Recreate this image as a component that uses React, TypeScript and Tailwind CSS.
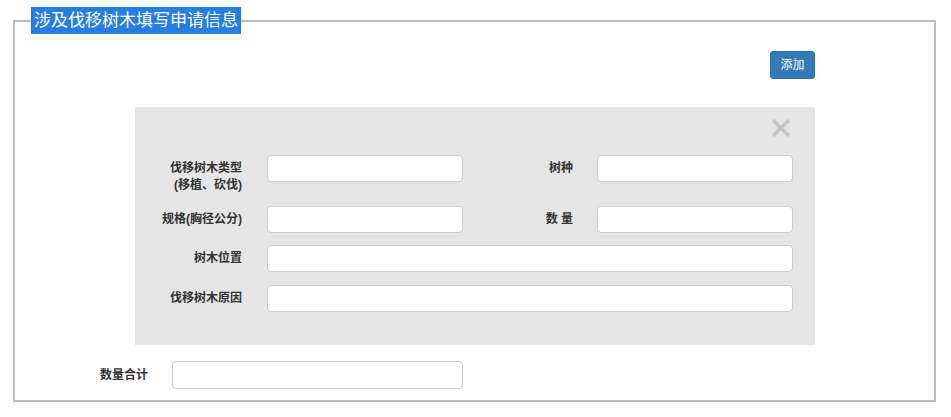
import { useState } from "react";

const font = { fontFamily: '"Liberation Sans", "Noto Sans CJK SC", sans-serif' };

function Field({ w }: { w: string }) {
  return (
    <input
      className={`${w} h-[27px] rounded-[4px] border border-[#cccccc] bg-white px-2 text-[12px] outline-none`}
    />
  );
}

export default function App() {
  const [open, setOpen] = useState(true);

  return (
    <div className="w-[951px] h-[417px] bg-white pt-[7px] pl-[13px]" style={font}>
      <fieldset className="m-0 w-[923px] h-[395px] border-2 border-[#bdbdbd] p-0">
        <legend className="ml-[16px] h-[27px] bg-[#267ee0] px-[3px] text-[17px] leading-[27px] text-white">
          涉及伐移树木填写申请信息
        </legend>

        <div className="flex w-[800px] justify-end mt-[17px]">
          <button className="h-[28px] w-[45px] rounded-[3px] border border-[#2e6da4] bg-[#337ab7] text-[12px] text-white">
            添加
          </button>
        </div>

        {open && (
          <div className="ml-[120px] mt-[28px] h-[238px] w-[680px] bg-[#e5e5e5] pt-[11px]">
            <div className="flex justify-end pr-[24px]">
              <button onClick={() => setOpen(false)} className="h-[20px] w-[20px]" aria-label="关闭">
                <svg width="20" height="20" viewBox="0 0 20 20">
                  <path d="M2 2 L18 18 M18 2 L2 18" stroke="#c4c4c4" strokeWidth="3.6" strokeLinecap="butt" />
                </svg>
              </button>
            </div>

            <div className="mt-[17px] text-[12px] font-bold text-[#333333]">
              <div className="flex items-start">
                <div className="w-[107px] pt-[5px] text-right leading-[17px]">
                  伐移树木类型
                  <br />
                  (移植、砍伐)
                </div>
                <div className="ml-[25px]"><Field w="w-[196px]" /></div>
                <div className="w-[110px] pt-[5px] text-right leading-[17px]">树种</div>
                <div className="ml-[24px]"><Field w="w-[196px]" /></div>
              </div>

              <div className="mt-[12px] flex items-center">
                <div className="w-[107px] text-right leading-[17px]">规格(胸径公分)</div>
                <div className="ml-[25px]"><Field w="w-[196px]" /></div>
                <div className="w-[110px] text-right leading-[17px]">数 量</div>
                <div className="ml-[24px]"><Field w="w-[196px]" /></div>
              </div>

              <div className="mt-[12px] flex items-center">
                <div className="w-[107px] text-right leading-[17px]">树木位置</div>
                <div className="ml-[25px]"><Field w="w-[526px]" /></div>
              </div>

              <div className="mt-[13px] flex items-center">
                <div className="w-[107px] text-right leading-[17px]">伐移树木原因</div>
                <div className="ml-[25px]"><Field w="w-[526px]" /></div>
              </div>
            </div>
          </div>
        )}

        <div className="mt-[16px] flex items-center text-[12px] font-bold text-[#333333]">
          <div className="w-[133px] text-right leading-[17px]">数量合计</div>
          <input className="ml-[24px] h-[28px] w-[291px] rounded-[4px] border border-[#cccccc] bg-white px-2 outline-none" />
        </div>
      </fieldset>
    </div>
  );
}
